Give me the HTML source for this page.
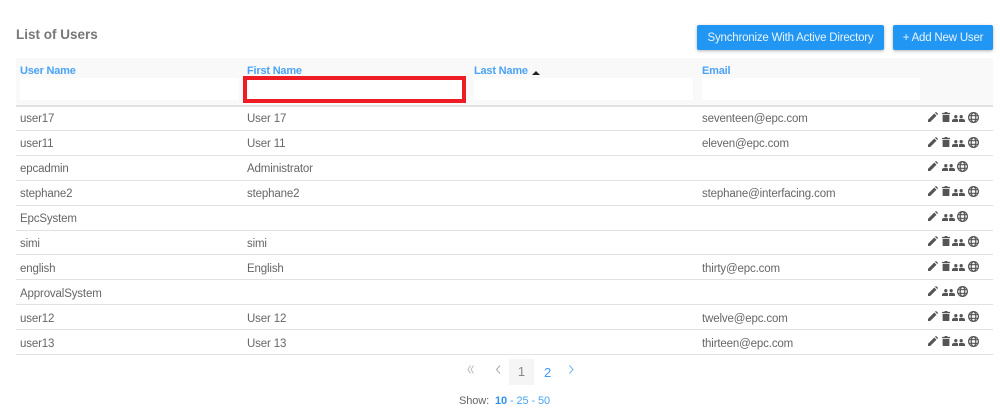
<!DOCTYPE html>
<html>
<head>
<meta charset="utf-8">
<style>
html,body{margin:0;padding:0;background:#fff;width:1000px;height:416px;overflow:hidden}
body{position:relative;font-family:"Liberation Sans",sans-serif;font-size:12px;color:#666}
.a{position:absolute;white-space:nowrap}
.hd{color:#4aa3f5;font-weight:bold;font-size:11px;letter-spacing:-.2px;top:64px;line-height:14px}
.inp{position:absolute;top:78px;height:22px;background:#fff}
.l{position:absolute;left:16px;width:977px;height:1px;background:#e2e2e2}
.c{position:absolute;line-height:14px;white-space:nowrap;color:#666;font-size:11.5px;letter-spacing:-.15px}
.btn{position:absolute;top:25px;height:25px;background:#2196f3;color:#e8f4fe;border-radius:2px;box-shadow:0 1px 3px rgba(0,0,0,.3);text-align:center;line-height:26px;font-size:11.5px;letter-spacing:-.2px}
svg{position:absolute;fill:#555}
.ic{position:absolute;left:928px;width:60px;height:11px}
.p{left:0;top:0}.b{left:14px;top:0}.u{left:24px;top:3px}.g{left:40px;top:0}
.nb .u{left:14px}.nb .g{left:29px}
</style>
</head>
<body>
<div class="a" style="left:16px;top:27px;font-size:13.5px;font-weight:bold;color:#777;line-height:16px">List of Users</div>
<div class="btn" style="left:697px;width:187px">Synchronize With Active Directory</div>
<div class="btn" style="left:893px;width:100px">+ Add New User</div>

<div class="a" style="left:16px;top:58px;width:977px;height:47px;background:#f9f9f9"></div>
<div class="a hd" style="left:20px">User Name</div>
<div class="a hd" style="left:247px">First Name</div>
<div class="a hd" style="left:474px">Last Name</div>
<div class="a" style="left:532px;top:71px;width:0;height:0;border-left:4px solid transparent;border-right:4px solid transparent;border-bottom:4px solid #222"></div>
<div class="a hd" style="left:702px">Email</div>
<div class="inp" style="left:20px;width:219px"></div>
<div class="inp" style="left:247px;width:219px"></div>
<div class="inp" style="left:474px;width:219px"></div>
<div class="inp" style="left:702px;width:218px"></div>
<div class="a" style="left:243px;top:76px;width:215px;height:19px;border:4px solid #ee1c25"></div>

<div class="l" style="top:105px;height:2px"></div>
<div class="l" style="top:130px"></div>
<div class="l" style="top:155px"></div>
<div class="l" style="top:180px"></div>
<div class="l" style="top:205px"></div>
<div class="l" style="top:230px"></div>
<div class="l" style="top:254px"></div>
<div class="l" style="top:279px"></div>
<div class="l" style="top:304px"></div>
<div class="l" style="top:329px"></div>
<div class="l" style="top:354px"></div>

<div class="c" style="left:20px;top:112px">user17</div><div class="c" style="left:247px;top:112px">User 17</div><div class="c" style="left:702px;top:112px">seventeen@epc.com</div>
<div class="c" style="left:20px;top:137px">user11</div><div class="c" style="left:247px;top:137px">User 11</div><div class="c" style="left:702px;top:137px">eleven@epc.com</div>
<div class="c" style="left:20px;top:162px">epcadmin</div><div class="c" style="left:247px;top:162px">Administrator</div>
<div class="c" style="left:20px;top:187px">stephane2</div><div class="c" style="left:247px;top:187px">stephane2</div><div class="c" style="left:702px;top:187px">stephane@interfacing.com</div>
<div class="c" style="left:20px;top:212px">EpcSystem</div>
<div class="c" style="left:20px;top:237px">simi</div><div class="c" style="left:247px;top:237px">simi</div>
<div class="c" style="left:20px;top:262px">english</div><div class="c" style="left:247px;top:262px">English</div><div class="c" style="left:702px;top:262px">thirty@epc.com</div>
<div class="c" style="left:20px;top:287px">ApprovalSystem</div>
<div class="c" style="left:20px;top:312px">user12</div><div class="c" style="left:247px;top:312px">User 12</div><div class="c" style="left:702px;top:312px">twelve@epc.com</div>
<div class="c" style="left:20px;top:337px">user13</div><div class="c" style="left:247px;top:337px">User 13</div><div class="c" style="left:702px;top:337px">thirteen@epc.com</div>

<svg width="0" height="0" style="position:absolute">
<defs>
<symbol id="pen" viewBox="0 0 10 10"><path d="M0 10V7.8L6.3 1.5L8.5 3.7L2.2 10ZM7 .8L7.7 .1Q7.9 0 8.2 .1L9.9 1.8Q10 2 9.9 2.3L9.2 3Z"/></symbol>
<symbol id="bin" viewBox="0 0 8 10"><path d="M0 .9H2.6V0H5.4V.9H8V2H0ZM.6 2.7H7.4V9.2Q7.4 10 6.6 10H1.4Q.6 10 .6 9.2Z"/></symbol>
<symbol id="ppl" viewBox="0 0 13 7"><circle cx="3.8" cy="1.6" r="1.6"/><circle cx="9.2" cy="1.6" r="1.6"/><path d="M0 7V5.6Q0 3.8 3.8 3.8Q5.4 3.8 6 4.5V7ZM7 7V4.5Q7.6 3.8 9.2 3.8Q13 3.8 13 5.6V7Z"/></symbol>
<symbol id="glb" viewBox="0 0 11 11"><g fill="none" stroke="#555" stroke-width="1.2"><circle cx="5.5" cy="5.5" r="4.9"/><ellipse cx="5.5" cy="5.5" rx="2.3" ry="4.9"/><path d="M.6 3.7H10.4M.6 7.3H10.4"/></g></symbol>
</defs>
</svg>

<div class="ic" style="top:112px"><svg class="p" width="10" height="10"><use href="#pen"/></svg><svg class="b" width="8" height="10"><use href="#bin"/></svg><svg class="u" width="13" height="7"><use href="#ppl"/></svg><svg class="g" width="11" height="11"><use href="#glb"/></svg></div>
<div class="ic" style="top:137px"><svg class="p" width="10" height="10"><use href="#pen"/></svg><svg class="b" width="8" height="10"><use href="#bin"/></svg><svg class="u" width="13" height="7"><use href="#ppl"/></svg><svg class="g" width="11" height="11"><use href="#glb"/></svg></div>
<div class="ic nb" style="top:161px"><svg class="p" width="10" height="10"><use href="#pen"/></svg><svg class="u" width="13" height="7"><use href="#ppl"/></svg><svg class="g" width="11" height="11"><use href="#glb"/></svg></div>
<div class="ic" style="top:186px"><svg class="p" width="10" height="10"><use href="#pen"/></svg><svg class="b" width="8" height="10"><use href="#bin"/></svg><svg class="u" width="13" height="7"><use href="#ppl"/></svg><svg class="g" width="11" height="11"><use href="#glb"/></svg></div>
<div class="ic nb" style="top:211px"><svg class="p" width="10" height="10"><use href="#pen"/></svg><svg class="u" width="13" height="7"><use href="#ppl"/></svg><svg class="g" width="11" height="11"><use href="#glb"/></svg></div>
<div class="ic" style="top:236px"><svg class="p" width="10" height="10"><use href="#pen"/></svg><svg class="b" width="8" height="10"><use href="#bin"/></svg><svg class="u" width="13" height="7"><use href="#ppl"/></svg><svg class="g" width="11" height="11"><use href="#glb"/></svg></div>
<div class="ic" style="top:261px"><svg class="p" width="10" height="10"><use href="#pen"/></svg><svg class="b" width="8" height="10"><use href="#bin"/></svg><svg class="u" width="13" height="7"><use href="#ppl"/></svg><svg class="g" width="11" height="11"><use href="#glb"/></svg></div>
<div class="ic nb" style="top:286px"><svg class="p" width="10" height="10"><use href="#pen"/></svg><svg class="u" width="13" height="7"><use href="#ppl"/></svg><svg class="g" width="11" height="11"><use href="#glb"/></svg></div>
<div class="ic" style="top:311px"><svg class="p" width="10" height="10"><use href="#pen"/></svg><svg class="b" width="8" height="10"><use href="#bin"/></svg><svg class="u" width="13" height="7"><use href="#ppl"/></svg><svg class="g" width="11" height="11"><use href="#glb"/></svg></div>
<div class="ic" style="top:336px"><svg class="p" width="10" height="10"><use href="#pen"/></svg><svg class="b" width="8" height="10"><use href="#bin"/></svg><svg class="u" width="13" height="7"><use href="#ppl"/></svg><svg class="g" width="11" height="11"><use href="#glb"/></svg></div>

<svg style="left:467px;top:365px;fill:none;stroke:#bbb;stroke-width:1" width="8" height="9"><path d="M3.5 .5L1 4.5L3.5 8.5M6.5 .5L4 4.5L6.5 8.5"/></svg>
<svg style="left:495px;top:365px;fill:none;stroke:#aaa;stroke-width:1" width="7" height="9"><path d="M5 .5L1.5 4.5L5 8.5"/></svg>
<div class="a" style="left:509px;top:359px;width:25px;height:26px;background:#f5f5f5;color:#888;text-align:center;line-height:26px;font-size:13px">1</div>
<div class="a" style="left:544px;top:366px;color:#3f9bf0;font-size:13px;line-height:14px">2</div>
<svg style="left:568px;top:365px;fill:none;stroke:#6db5f5;stroke-width:1" width="7" height="9"><path d="M1.5 .5L5 4.5L1.5 8.5"/></svg>
<div class="a" style="left:459px;top:394px;font-size:11px;letter-spacing:-.1px;line-height:14px;color:#666">Show:</div>
<div class="a" style="left:495px;top:394px;font-size:11px;letter-spacing:-.1px;line-height:14px;color:#4aa3f5"><b style="color:#2f92ee">10</b> - 25 - 50</div>
</body>
</html>
